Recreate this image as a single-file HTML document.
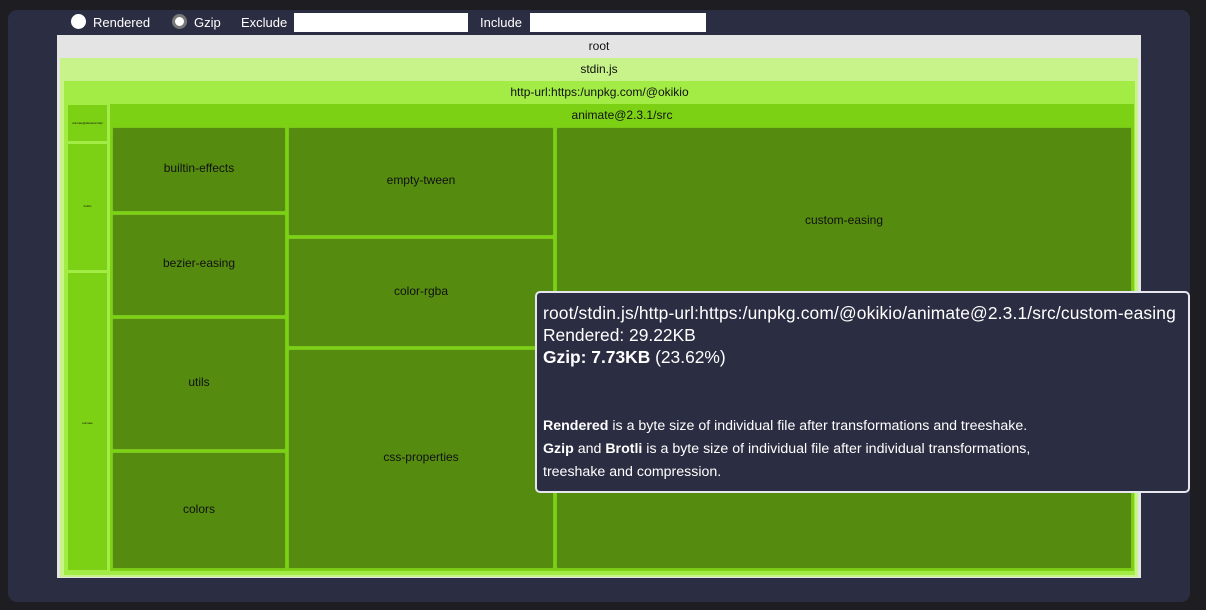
<!DOCTYPE html>
<html><head><style>
*{box-sizing:border-box;margin:0;padding:0}
body{width:1206px;height:610px;background:#1e1e22;font-family:"Liberation Sans",sans-serif;position:relative;overflow:hidden}
.panel{position:absolute;left:8px;top:10px;width:1182px;height:592px;background:#2b2d42;border-radius:9px}
.abs{position:absolute}
.top{color:#fff;font-size:13px}
.in{position:absolute;background:#fff;height:19px;top:13px}
.rad{position:absolute;top:14px;width:15px;height:15px;border-radius:50%}
.box{position:absolute;text-align:center;font-size:12px;color:#111}
.cell{position:absolute;background:#558b0f;border:1px solid #7bc61a;border-radius:2px;font-size:12px;color:#111;display:flex;align-items:center;justify-content:center;padding-bottom:4px}
.tip{position:absolute;left:535px;top:291px;width:655px;height:202px;background:#2b2d42;border:2px solid #e6e6ee;border-radius:5px;color:#fff;padding:9px 0 0 6px}
</style></head><body>
<div class="panel"></div>
<div class="rad" style="left:71px;background:#fff"></div>
<div class="abs top" style="left:93px;top:15px">Rendered</div>
<div class="rad" style="left:172px;background:#fff;border:3px solid #777"></div>
<div class="abs top" style="left:194px;top:15px">Gzip</div>
<div class="abs top" style="left:241px;top:15px">Exclude</div>
<div class="in" style="left:294px;width:174px"></div>
<div class="abs top" style="left:480px;top:15px">Include</div>
<div class="in" style="left:530px;width:176px"></div>

<div class="box" style="left:57px;top:35px;width:1084px;height:543px;background:#e4e4e4;padding-top:4px">root</div>
<div class="box" style="left:60px;top:58px;width:1078px;height:519px;background:#c8f28a;padding-top:4px">stdin.js</div>
<div class="box" style="left:64px;top:81px;width:1071px;height:494px;background:#a3ec45;padding-top:4px">http-url:https:/unpkg.com/@okikio</div>
<div class="box" style="left:67px;top:104px;width:41px;height:38px;background:#7dd114;border:1px solid #a3ec45;font-size:3px;padding-top:16px">animate@latest/src/api</div>
<div class="box" style="left:67px;top:143px;width:41px;height:128px;background:#7dd114;border:1px solid #a3ec45;font-size:3px;padding-top:60px">builtin</div>
<div class="box" style="left:67px;top:272px;width:41px;height:299px;background:#7dd114;border:1px solid #a3ec45;font-size:3px;padding-top:148px">animate</div>
<div class="box" style="left:110px;top:104px;width:1024px;height:467px;background:#7dd114;padding-top:4px">animate@2.3.1/src</div>

<div class="cell" style="left:112px;top:127px;width:174px;height:85px">builtin-effects</div>
<div class="cell" style="left:112px;top:214px;width:174px;height:102px">bezier-easing</div>
<div class="cell" style="left:112px;top:318px;width:174px;height:132px">utils</div>
<div class="cell" style="left:112px;top:452px;width:174px;height:117px">colors</div>
<div class="cell" style="left:288px;top:127px;width:266px;height:109px">empty-tween</div>
<div class="cell" style="left:288px;top:238px;width:266px;height:109px">color-rgba</div>
<div class="cell" style="left:288px;top:349px;width:266px;height:220px">css-properties</div>
<div class="cell" style="left:556px;top:127px;width:576px;height:442px;align-items:flex-start;padding-top:85px">custom-easing</div>

<div class="tip">
<div style="font-size:17.4px;line-height:22px;letter-spacing:0.15px">root/stdin.js/http-url:https:/unpkg.com/@okikio/animate@2.3.1/src/custom-easing</div>
<div style="font-size:17.4px;line-height:22px">Rendered: 29.22KB</div>
<div style="font-size:17.4px;line-height:22px"><b>Gzip: 7.73KB</b> (23.62%)</div>
<div style="font-size:14.2px;line-height:23px;margin-top:47px"><b>Rendered</b> is a byte size of individual file after transformations and treeshake.<br><b>Gzip</b> and <b>Brotli</b> is a byte size of individual file after individual transformations,<br>treeshake and compression.</div>
</div>
</body></html>
